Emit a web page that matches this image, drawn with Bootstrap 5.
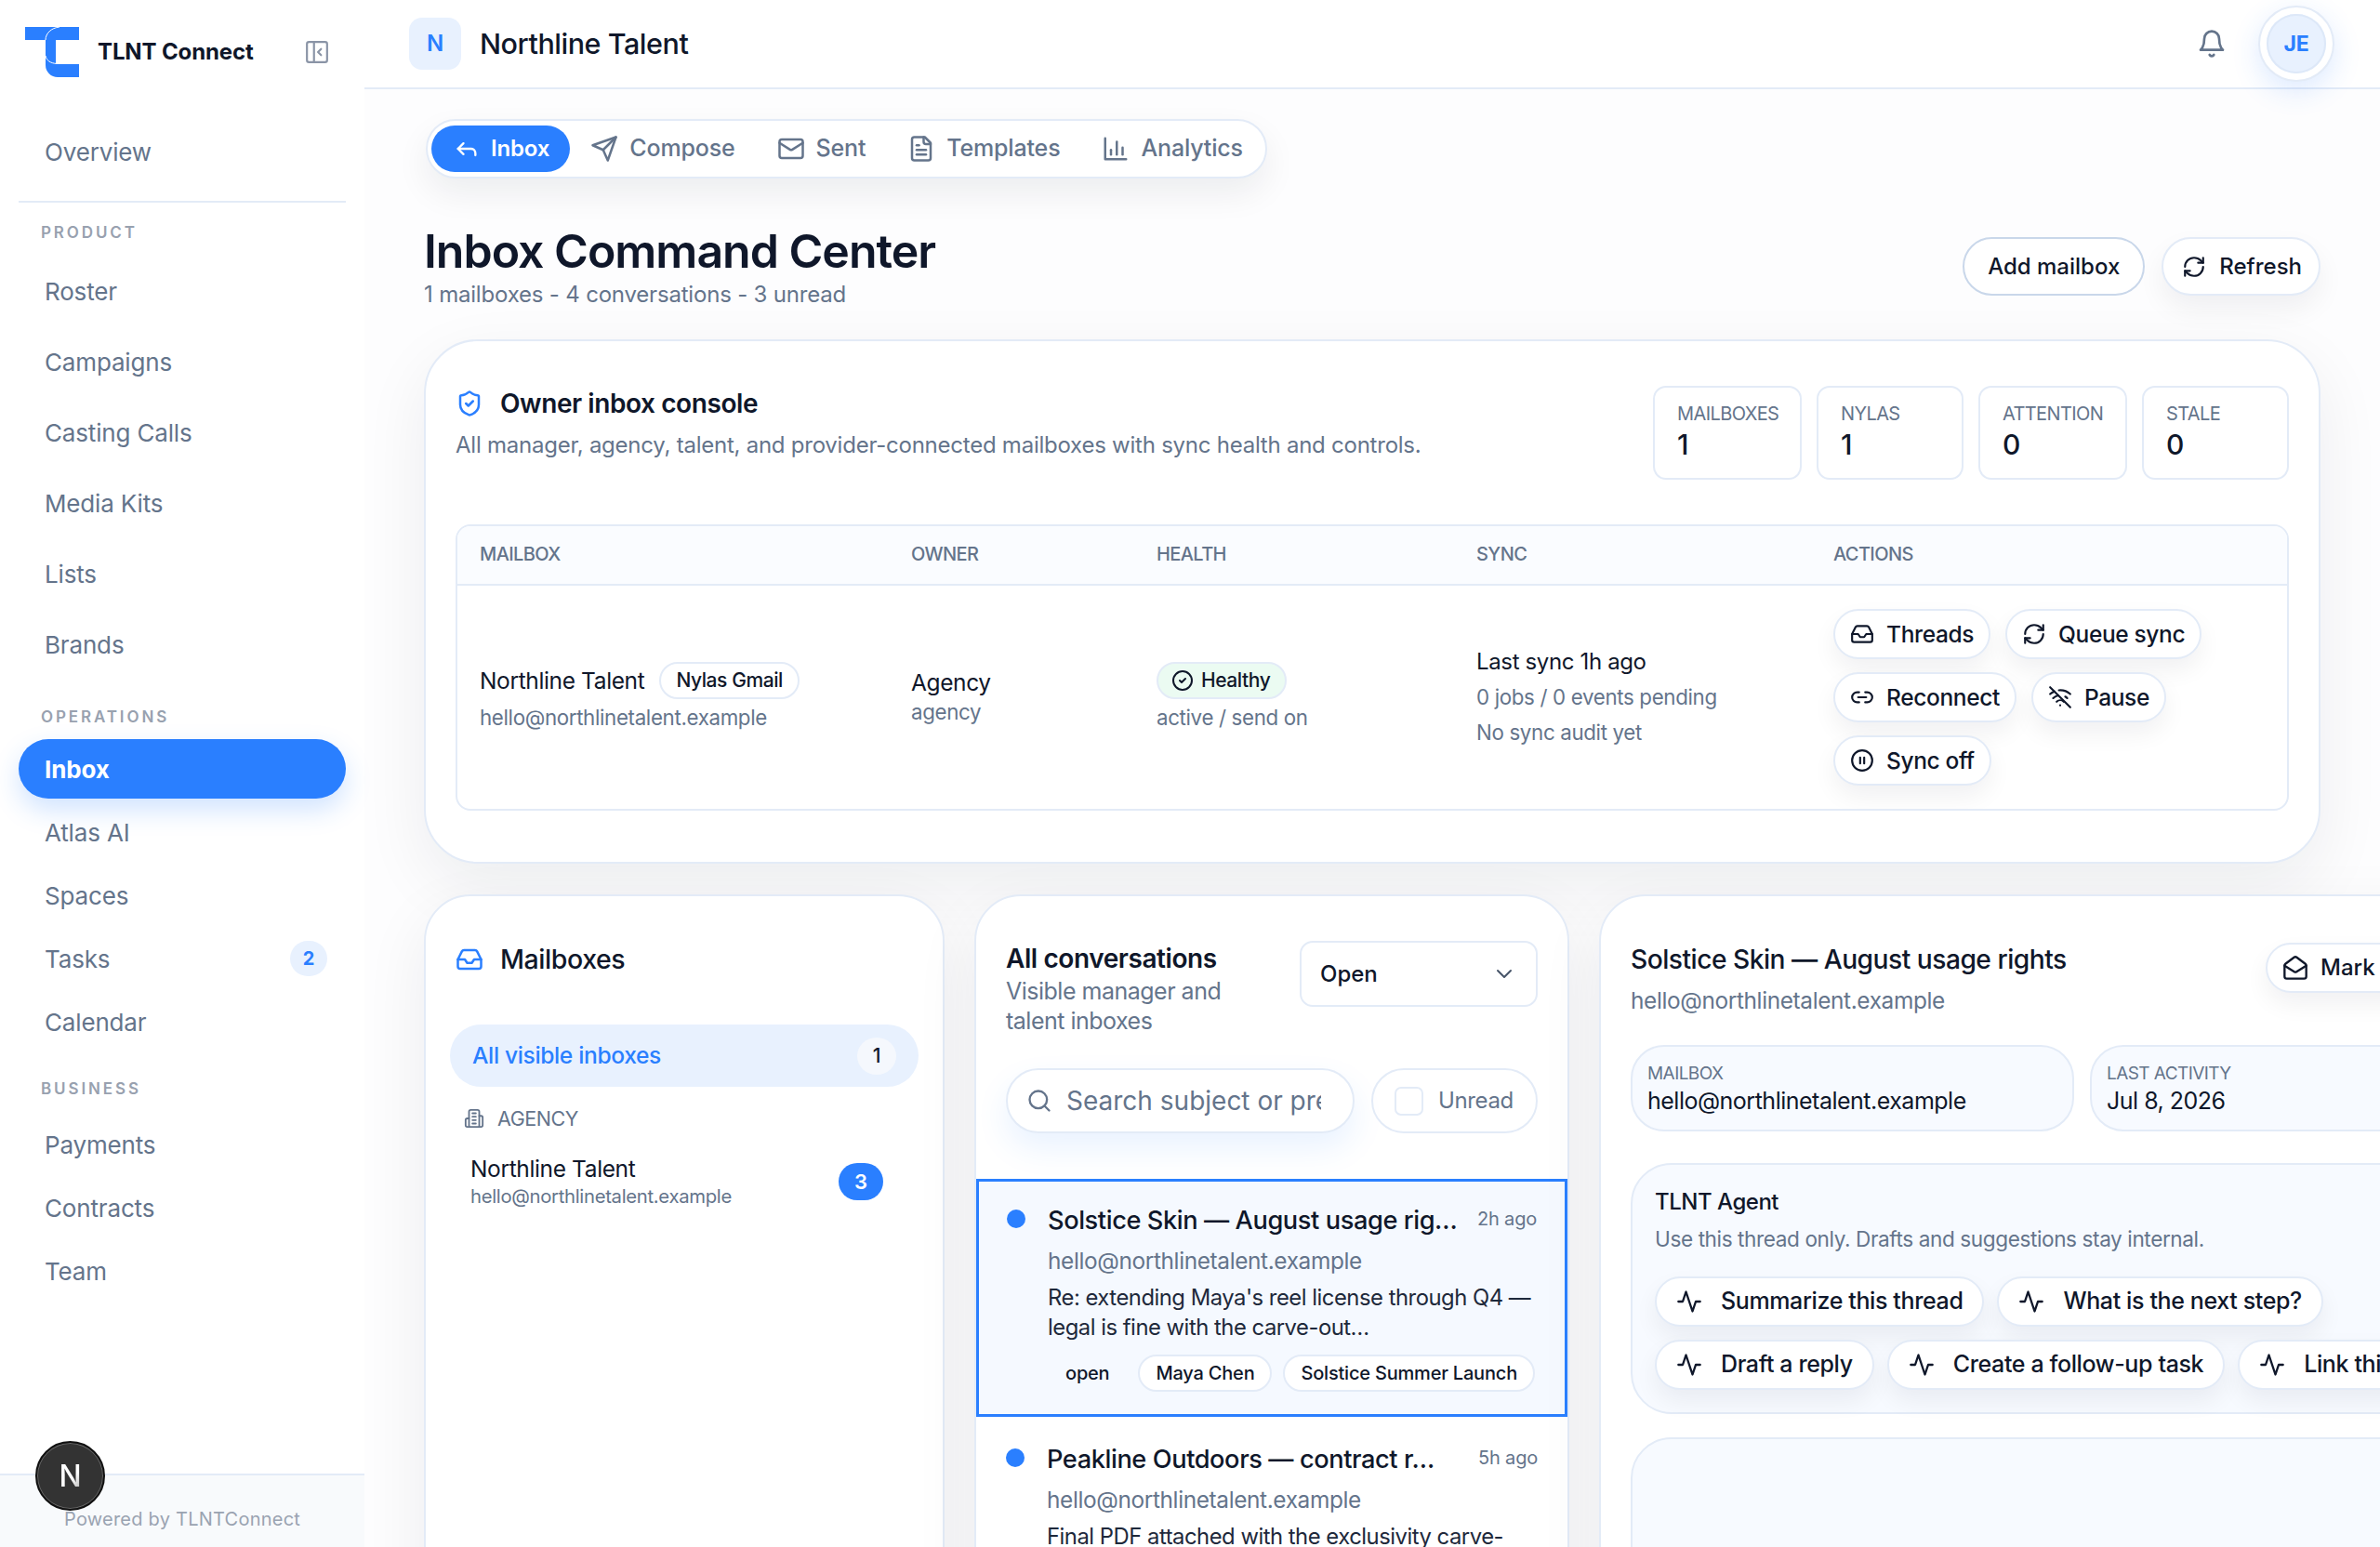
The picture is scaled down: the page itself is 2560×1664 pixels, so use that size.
<!DOCTYPE html>
<html lang="en">
<head>
  <meta charset="UTF-8">
  <title>Inbox Command Center</title>
  <link href="https://cdn.jsdelivr.net/npm/bootstrap@5.3.5/dist/css/bootstrap.min.css" rel="stylesheet">
  <style>
    :root {
      --tl-blue: #2a7fff;
      --tl-ink: #0f172a;
      --tl-muted: #64748b;
      --tl-line: #e3ebf7;
      --tl-soft: #f7faff;
    }
    html, body { height: 100%; }
    body { font-family: Inter, "Noto Sans", sans-serif; color: var(--tl-ink); background: #fdfdfe; overflow: hidden; letter-spacing: -.01em; }
    .tl-shell { height: 100vh; overflow: hidden; }
    .tl-ic { fill: none; stroke: currentColor; stroke-width: 2; stroke-linecap: round; stroke-linejoin: round; flex: none; }

    /* sidebar */
    .tl-side { width: 392px; flex: none; background: #fff; height: 100vh; position: relative; }
    .tl-brand { height: 112px; padding: 0 38px 0 27px; }
    .tl-brand-name { font-size: 24px; font-weight: 700; margin-left: 20px; letter-spacing: -.005em; }
    .tl-collapse { color: #8a94a6; margin-left: auto; }
    .tl-menu { margin: 0 20px; }
    .tl-first { margin-top: 19px; }
    .tl-menu .nav-link { height: 64px; display: flex; align-items: center; padding: 0 28px; color: var(--tl-muted); font-size: 26px; border-radius: 32px; }
    .tl-menu .nav-link.active { background: var(--tl-blue); color: #fff; font-weight: 700; box-shadow: 0 12px 28px rgba(42,127,255,.22); }
    .tl-gap-lg { gap: 12px; }
    .tl-gap-sm { gap: 4px; }
    .tl-rule { height: 2px; background: var(--tl-line); margin: 21px 20px 0; }
    .tl-seclabel { height: 28px; line-height: 28px; margin-left: 44px; font-size: 17px; font-weight: 600; letter-spacing: .17em; color: #98a1af; }
    .tl-sec-a { margin-top: 18px; margin-bottom: 17px; }
    .tl-sec-b { margin-top: 32px; margin-bottom: 10px; }
    .tl-sec-c { margin-top: 26px; margin-bottom: 14px; }
    .tl-count { margin-left: auto; margin-right: -8px; width: 40px; height: 38px; border-radius: 19px; background: #e8f1fe; color: var(--tl-blue); font-size: 20px; font-weight: 700; }
    .tl-foot { position: absolute; left: 0; right: 0; bottom: 0; height: 79px; background: #f8fafc; border-top: 2px solid var(--tl-line); padding-top: 34px; padding-left: 69px; font-size: 20px; color: #9aa3b1; letter-spacing: .012em; line-height: 26px; }
    .tl-devbadge { position: absolute; left: 38px; top: 1550px; width: 75px; height: 75px; border-radius: 50%; background: #333; border: 2px solid #111; box-shadow: 0 0 0 1px #666 inset; font-size: 32px; font-weight: 500; }
    .tl-devbadge span { background: linear-gradient(135deg, #fff 55%, #8d8d8d); -webkit-background-clip: text; background-clip: text; color: transparent; }

    /* top bar */
    .tl-main { flex: 1 1 auto; min-width: 0; height: 100vh; overflow: hidden; }
    .tl-top { height: 96px; border-bottom: 2px solid var(--tl-line); padding: 0 49px 0 48px; background: #fff; }
    .tl-tile { width: 56px; height: 56px; border-radius: 14px; background: #e8f1fe; color: var(--tl-blue); font-size: 24px; font-weight: 600; }
    .tl-workspace { font-size: 30.500px; font-weight: 500; margin-left: 20px; letter-spacing: -.015em; }
    .tl-bell { color: var(--tl-muted); margin-right: 34px; }
    .tl-avatar { width: 82px; height: 82px; border-radius: 50%; border: 2px solid var(--tl-line); padding: 7px; background: #fff; box-shadow: 0 10px 30px rgba(42,127,255,.16); position: relative; z-index: 2; }
    .tl-avatar span { width: 100%; height: 100%; border-radius: 50%; background: #e8f1fe; box-shadow: inset 0 0 0 2px #dde8f8; color: var(--tl-blue); font-size: 23px; font-weight: 700; display: flex; align-items: center; justify-content: center; }

    /* page */
    .tl-page { padding: 32px 0 0 64px; }
    .tl-inner { width: 2040px; }
    .tl-tabs { width: 905px; height: 64px; margin-left: 2px; border: 2px solid var(--tl-line); border-radius: 32px; background: #fff; box-shadow: 0 16px 36px rgba(15,23,42,.07); padding: 0 4px; gap: 5px; }
    .tl-tab { height: 50px; display: flex; align-items: center; gap: 12px; color: var(--tl-muted); font-size: 25px; font-weight: 500; padding: 0 20px; border-radius: 25px; text-decoration: none; }
    .tl-tab.active { background: var(--tl-blue); color: #fff; font-size: 24px; font-weight: 600; padding: 0 22px 0 24px; margin-right: -3px; }
    .tl-head { margin-top: 48px; margin-bottom: 32px; height: 93px; }
    .tl-h1 { font-size: 50px; line-height: 60px; font-weight: 600; margin: 0; letter-spacing: -.02em; }
    .tl-sub { font-size: 24px; line-height: 33px; color: var(--tl-muted); margin: 0; letter-spacing: -.008em; }
    .tl-btn { height: 63px; border-radius: 32px; background: #fff; border: 2px solid var(--tl-line); color: var(--tl-ink); font-size: 24px; font-weight: 500; padding: 0 18px 0 20px; display: inline-flex; align-items: center; gap: 14px; box-shadow: 0 14px 30px rgba(15,23,42,.06); }
    .tl-btn-line { border-color: #c9d7ea; box-shadow: none; padding: 0 25px; margin-right: 18px; }

    .tl-panel { background: #fff; border: 2px solid var(--tl-line); box-shadow: 0 24px 70px rgba(15,23,42,.07); }
    .tl-console { border-radius: 58px; padding: 48px 32px 56px; height: 564px; }
    .tl-console-title { font-size: 28px; font-weight: 600; line-height: 38px; letter-spacing: -.015em; margin-left: 18px; }
    .tl-console-desc { font-size: 24px; line-height: 34px; color: var(--tl-muted); margin: 9px 0 0; letter-spacing: -.01em; }
    .tl-stat { height: 101px; border: 2px solid var(--tl-line); border-radius: 14px; padding: 14px 24px; }
    .tl-stat-a { width: 160px; }
    .tl-stat-b { width: 158px; }
    .tl-stat-lab { font-size: 20px; line-height: 28px; color: var(--tl-muted); letter-spacing: -.03em; }
    .tl-stat-val { font-size: 30px; line-height: 38px; font-weight: 500; }
    .tl-tablewrap { margin-top: 48px; border: 2px solid var(--tl-line); border-radius: 16px; overflow: hidden; }
    .tl-table { margin: 0; table-layout: fixed; width: 100%; }
    .tl-table th { height: 63px; background: #fafcff; color: var(--tl-muted); font-size: 20px; line-height: 24px; font-weight: 500; padding: 0 0 3px 24px; vertical-align: middle; border-bottom: 2px solid var(--tl-line); letter-spacing: -.03em; }
    .tl-table td { height: 241px; padding: 0 0 0 24px; vertical-align: middle; border: 0; color: var(--tl-ink); }
    .tl-w1 { width: 464px; } .tl-w2 { width: 264px; } .tl-w3 { width: 344px; } .tl-w4 { width: 384px; }
    .tl-strong { font-size: 24.500px; line-height: 32px; letter-spacing: -.015em; }
    .tl-quiet { font-size: 22.300px; line-height: 32px; color: var(--tl-muted); letter-spacing: -.015em; }
    .tl-sync { font-size: 24px; }
    .tl-stack { margin-top: 6px; }
    .tl-chip { display: inline-flex; align-items: center; gap: 8px; height: 40px; border-radius: 20px; border: 2px solid var(--tl-line); background: #fff; font-size: 21px; font-weight: 500; padding: 0 16px; letter-spacing: -.02em; }
    .tl-chip-ok { background: #ebfbf2; padding: 0 16px 0 14px; }
    .tl-actions { gap: 14px 16px; }
    .tl-act { height: 54px; border-radius: 27px; background: #fff; border: 2px solid var(--tl-line); color: var(--tl-ink); font-size: 24.500px; font-weight: 500; padding: 0 16px; display: inline-flex; align-items: center; gap: 13px; box-shadow: 0 12px 26px rgba(15,23,42,.06); letter-spacing: -.015em; }

    /* lower panels */
    .tl-lower { margin-top: 33px; gap: 32px; width: 2400px; }
    .tl-col-a { width: 560px; flex: none; height: 800px; border-radius: 50px; padding: 48px 26px; }
    .tl-col-b { width: 640px; flex: none; height: 800px; border-radius: 50px; overflow: hidden; }
    .tl-col-c { width: 1100px; flex: none; height: 800px; border-radius: 50px; padding: 48px 32px; }
    .tl-panel-title { font-size: 28.500px; line-height: 40px; font-weight: 500; letter-spacing: -.015em; }
    .tl-box-head { margin-left: 6px; gap: 18px; }
    .tl-all { height: 67px; border-radius: 34px; background: #e8f1fe; margin-top: 50px; padding: 0 24px; color: var(--tl-blue); font-size: 24.600px; font-weight: 500; letter-spacing: -.015em; }
    .tl-all-n { width: 42px; height: 40px; border-radius: 50%; background: #f5f8fd; color: var(--tl-ink); font-size: 21px; margin-left: auto; margin-right: 0; }
    .tl-group { color: var(--tl-muted); font-size: 21.500px; line-height: 30px; margin: 19px 0 0 15px; gap: 14px; letter-spacing: -.02em; }
    .tl-mbx { margin: 23px 38px 0 22px; }
    .tl-mbx-mail { font-size: 20.300px; line-height: 28px; color: var(--tl-muted); letter-spacing: -.015em; }
    .tl-mbx-n { width: 48px; height: 40px; border-radius: 20px; background: var(--tl-blue); color: #fff; font-size: 22px; font-weight: 600; margin-left: auto; }

    .tl-conv-head { padding: 48px 32px 0; }
    .tl-conv-title { font-size: 28px; line-height: 38px; font-weight: 600; letter-spacing: -.015em; }
    .tl-conv-sub { font-size: 25px; line-height: 32px; color: var(--tl-muted); width: 300px; letter-spacing: -.02em; }
    .tl-select { width: 256px; height: 71px; margin-top: 0; border: 2px solid var(--tl-line); border-radius: 14px; color: var(--tl-ink); font-size: 24px; font-weight: 500; padding: 0 58px 0 20px; background-image: url("data:image/svg+xml,%3csvg xmlns='http://www.w3.org/2000/svg' viewBox='0 0 24 24' fill='none' stroke='%23475569' stroke-width='2' stroke-linecap='round' stroke-linejoin='round'%3e%3cpath d='m5 8 7 7 7-7'/%3e%3c/svg%3e"); background-position: right 22px center; background-size: 24px; }
    .tl-search-row { padding: 0 32px; margin-top: 35px; gap: 18px; }
    .tl-search { width: 375px; height: 70px; border: 2px solid var(--tl-line); border-radius: 35px; padding: 0 34px 0 20px; gap: 15px; box-shadow: 0 16px 34px rgba(42,127,255,.1); color: var(--tl-muted); background: #fff; }
    .tl-search .form-control { border: 0; padding: 0; font-size: 28px; letter-spacing: 0; box-shadow: none; background: none; color: var(--tl-muted); min-width: 0; }
    .tl-search .form-control::placeholder { color: var(--tl-muted); opacity: 1; }
    .tl-unread { width: 179px; height: 70px; border: 2px solid var(--tl-line); border-radius: 35px; padding-left: 23px; gap: 16px; font-size: 24px; color: var(--tl-muted); letter-spacing: -.015em; }
    .tl-unread .form-check-input { width: 31px; height: 31px; margin: 0; border: 2px solid var(--tl-line); border-radius: 7px; flex: none; }
    .tl-threads { margin-top: 49px; }
    .tl-thread { padding: 30px 32px 0; border-bottom: 2px solid var(--tl-line); height: 256px; }
    .tl-thread.active { background: #f5f9ff; border: 3px solid var(--tl-blue); padding: 26px 30px 0; }
    .tl-dot { width: 20px; height: 20px; border-radius: 50%; background: var(--tl-blue); flex: none; margin-top: 4px; }
    .tl-thread-body { margin-left: 24px; min-width: 0; flex: 1; }
    .tl-thread-title { font-size: 27.200px; line-height: 32px; font-weight: 500; white-space: nowrap; min-width: 0; flex: 1; letter-spacing: -.015em; }
    .tl-when { font-size: 20px; line-height: 28px; color: var(--tl-muted); flex: none; letter-spacing: -.01em; }
    .tl-thread-mail { font-size: 24.400px; line-height: 32px; color: var(--tl-muted); margin-top: 11px; letter-spacing: -.015em; }
    .tl-thread-text { font-size: 23.800px; line-height: 32px; margin-top: 8px; letter-spacing: -.02em; color: #1e293b; }
    .tl-tags { margin-top: 13px; gap: 12px; }
    .tl-tag { height: 40px; border-radius: 20px; border: 2px solid var(--tl-line); font-size: 20px; font-weight: 500; padding: 0 17px; background: #fff; letter-spacing: -.01em; white-space: nowrap; }
    .tl-tag-bare { border-color: transparent; background: none; }

    .tl-detail-head { width: 683px; }
    .tl-detail-title { font-size: 28.200px; line-height: 40px; font-weight: 500; letter-spacing: -.018em; }
    .tl-detail-mail { font-size: 24.400px; line-height: 32px; margin-top: 8px; color: var(--tl-muted); letter-spacing: -.015em; }
    .tl-mark { height: 54px; border-radius: 27px; background: #fff; border: 2px solid var(--tl-line); font-size: 24px; font-weight: 500; padding: 0 16px; display: flex; align-items: center; gap: 13px; white-space: nowrap; box-shadow: 0 12px 26px rgba(15,23,42,.06); margin-top: 2px; color: var(--tl-ink); }
    .tl-meta-row { margin-top: 32px; gap: 17px; }
    .tl-meta { height: 93px; width: 477px; background: var(--tl-soft); border: 2px solid var(--tl-line); border-radius: 36px; padding: 16px 16px; flex: none; }
    .tl-meta-lab { font-size: 19px; line-height: 26px; color: var(--tl-muted); letter-spacing: -.03em; }
    .tl-meta-val { font-size: 25px; line-height: 32px; letter-spacing: -.02em; }
    .tl-agent { margin-top: 34px; height: 270px; background: var(--tl-soft); border: 2px solid var(--tl-line); border-radius: 44px; padding: 24px 24px; }
    .tl-agent-title { font-size: 24px; line-height: 32px; font-weight: 500; letter-spacing: -.02em; }
    .tl-agent-desc { font-size: 22.600px; line-height: 32px; color: var(--tl-muted); margin-top: 8px; letter-spacing: -.018em; }
    .tl-asks { margin-top: 24px; gap: 14px; width: 1000px; }
    .tl-asks .tl-actions { gap: 14px; }
    .tl-ask { font-size: 25px; padding: 0 21px; gap: 20px; }
    .tl-next { margin-top: 25px; height: 300px; background: var(--tl-soft); border: 2px solid var(--tl-line); border-radius: 44px; }
    .tl-blue { color: var(--tl-blue); }
  </style>
</head>
<body>
  <svg class="d-none" xmlns="http://www.w3.org/2000/svg">
    <symbol id="i-reply" viewBox="0 0 24 24"><polyline points="9 17 4 12 9 7"/><path d="M20 18v-2a4 4 0 0 0-4-4H4"/></symbol>
    <symbol id="i-send" viewBox="0 0 24 24"><path d="m22 2-7 20-4-9-9-4Z"/><path d="M22 2 11 13"/></symbol>
    <symbol id="i-mail" viewBox="0 0 24 24"><rect width="20" height="16" x="2" y="4" rx="2"/><path d="m22 7-8.97 5.7a1.94 1.94 0 0 1-2.06 0L2 7"/></symbol>
    <symbol id="i-file" viewBox="0 0 24 24"><path d="M15 2H6a2 2 0 0 0-2 2v16a2 2 0 0 0 2 2h12a2 2 0 0 0 2-2V7Z"/><path d="M14 2v4a2 2 0 0 0 2 2h4"/><path d="M10 9H8"/><path d="M16 13H8"/><path d="M16 17H8"/></symbol>
    <symbol id="i-chart" viewBox="0 0 24 24"><path d="M3 3v18h18"/><path d="M8 17v-4"/><path d="M13 17V6"/><path d="M18 17v-6"/></symbol>
    <symbol id="i-bell" viewBox="0 0 24 24"><path d="M6 8a6 6 0 0 1 12 0c0 7 3 9 3 9H3s3-2 3-9"/><path d="M10.3 21a1.94 1.94 0 0 0 3.4 0"/></symbol>
    <symbol id="i-refresh" viewBox="0 0 24 24"><path d="M3 12a9 9 0 0 1 9-9 9.75 9.75 0 0 1 6.74 2.74L21 8"/><path d="M21 3v5h-5"/><path d="M21 12a9 9 0 0 1-9 9 9.75 9.75 0 0 1-6.74-2.74L3 16"/><path d="M8 16H3v5"/></symbol>
    <symbol id="i-shield" viewBox="0 0 24 24"><path d="M20 13c0 5-3.5 7.5-7.66 8.95a1 1 0 0 1-.67-.01C7.5 20.5 4 18 4 13V6a1 1 0 0 1 1-1c2 0 4.5-1.2 6.24-2.72a1.17 1.17 0 0 1 1.52 0C14.51 3.81 17 5 19 5a1 1 0 0 1 1 1z"/><path d="m9 12 2 2 4-4"/></symbol>
    <symbol id="i-inbox" viewBox="0 0 24 24"><polyline points="22 12 16 12 14 15 10 15 8 12 2 12"/><path d="M5.45 5.11 2 12v6a2 2 0 0 0 2 2h16a2 2 0 0 0 2-2v-6l-3.45-6.89A2 2 0 0 0 16.76 4H7.24a2 2 0 0 0-1.79 1.11z"/></symbol>
    <symbol id="i-link" viewBox="0 0 24 24"><path d="M9 17H7A5 5 0 0 1 7 7h2"/><path d="M15 7h2a5 5 0 1 1 0 10h-2"/><line x1="8" x2="16" y1="12" y2="12"/></symbol>
    <symbol id="i-wifioff" viewBox="0 0 24 24"><path d="M12 20h.01"/><path d="M8.5 16.429a5 5 0 0 1 7 0"/><path d="M5 12.859a10 10 0 0 1 5.17-2.69"/><path d="M19 12.859a10 10 0 0 0-2.007-1.523"/><path d="M2 8.82a15 15 0 0 1 4.177-2.643"/><path d="M22 8.82a15 15 0 0 0-11.288-3.764"/><path d="m2 2 20 20"/></symbol>
    <symbol id="i-pause" viewBox="0 0 24 24"><circle cx="12" cy="12" r="10"/><line x1="10" x2="10" y1="15" y2="9"/><line x1="14" x2="14" y1="15" y2="9"/></symbol>
    <symbol id="i-activity" viewBox="0 0 24 24"><polyline points="22 12 18 12 15 21 9 3 6 12 2 12"/></symbol>
    <symbol id="i-mailopen" viewBox="0 0 24 24"><path d="M21.2 8.4c.5.38.8.97.8 1.6v10a2 2 0 0 1-2 2H4a2 2 0 0 1-2-2V10a2 2 0 0 1 .8-1.6l8-6a2 2 0 0 1 2.4 0l8 6Z"/><path d="m22 10-8.97 5.7a1.94 1.94 0 0 1-2.06 0L2 10"/></symbol>
    <symbol id="i-building" viewBox="0 0 24 24"><path d="M6 22V4a2 2 0 0 1 2-2h8a2 2 0 0 1 2 2v18Z"/><path d="M6 12H4a2 2 0 0 0-2 2v6a2 2 0 0 0 2 2h2"/><path d="M18 9h2a2 2 0 0 1 2 2v9a2 2 0 0 1-2 2h-2"/><path d="M10 6h4"/><path d="M10 10h4"/><path d="M10 14h4"/><path d="M10 18h4"/></symbol>
    <symbol id="i-check" viewBox="0 0 24 24"><circle cx="12" cy="12" r="10"/><path d="m9 12 2 2 4-4"/></symbol>
    <symbol id="i-search" viewBox="0 0 24 24"><circle cx="11" cy="11" r="8"/><path d="m21 21-4.3-4.3"/></symbol>
    <symbol id="i-panel" viewBox="0 0 24 24"><rect width="20" height="20" x="2" y="2" rx="2"/><path d="M9 2v20"/><path d="m16 15-3-3 3-3"/></symbol>
  </svg>

  <div class="tl-shell d-flex">
    <!-- sidebar -->
    <aside class="tl-side">
      <div class="tl-brand d-flex align-items-center">
        <svg width="58" height="54" viewBox="0 0 58 54" xmlns="http://www.w3.org/2000/svg" aria-hidden="true">
          <path fill="#2a7fff" d="M0 0H58V14H33V40H58V54H35A13 13 0 0 1 22 41V14H0Z"/>
          <path fill="none" stroke="#fff" stroke-width="1" d="M37 0C28 1 22 7 22 14M22 31C23 36 27 39 34 39.500"/>
        </svg>
        <span class="tl-brand-name">TLNT Connect</span>
        <svg class="tl-ic tl-collapse" width="26" height="26"><use href="#i-panel"/></svg>
      </div>

      <nav class="nav flex-column tl-menu tl-first"><a class="nav-link" href="#">Overview</a></nav>
      <div class="tl-rule"></div>

      <div class="tl-seclabel tl-sec-a">PRODUCT</div>
      <nav class="nav flex-column tl-menu tl-gap-lg">
        <a class="nav-link" href="#">Roster</a>
        <a class="nav-link" href="#">Campaigns</a>
        <a class="nav-link" href="#">Casting Calls</a>
        <a class="nav-link" href="#">Media Kits</a>
        <a class="nav-link" href="#">Lists</a>
        <a class="nav-link" href="#">Brands</a>
      </nav>

      <div class="tl-seclabel tl-sec-b">OPERATIONS</div>
      <nav class="nav flex-column tl-menu tl-gap-sm">
        <a class="nav-link active" href="#">Inbox</a>
        <a class="nav-link" href="#">Atlas AI</a>
        <a class="nav-link" href="#">Spaces</a>
        <a class="nav-link" href="#">Tasks<span class="tl-count d-flex align-items-center justify-content-center">2</span></a>
        <a class="nav-link" href="#">Calendar</a>
      </nav>

      <div class="tl-seclabel tl-sec-c">BUSINESS</div>
      <nav class="nav flex-column tl-menu tl-gap-sm">
        <a class="nav-link" href="#">Payments</a>
        <a class="nav-link" href="#">Contracts</a>
        <a class="nav-link" href="#">Team</a>
      </nav>

      <div class="tl-foot">Powered by TLNTConnect</div>
      <div class="tl-devbadge d-flex align-items-center justify-content-center"><span>N</span></div>
    </aside>

    <main class="tl-main">
      <header class="tl-top d-flex align-items-center">
        <div class="tl-tile d-flex align-items-center justify-content-center">N</div>
        <div class="tl-workspace">Northline Talent</div>
        <svg class="tl-ic tl-bell ms-auto" width="32" height="32"><use href="#i-bell"/></svg>
        <div class="tl-avatar"><span>JE</span></div>
      </header>

      <div class="tl-page">
        <div class="tl-inner">
          <nav class="tl-tabs d-flex align-items-center">
            <a class="tl-tab active" href="#"><svg class="tl-ic" width="28" height="28"><use href="#i-reply"/></svg>Inbox</a>
            <a class="tl-tab" href="#"><svg class="tl-ic" width="30" height="30"><use href="#i-send"/></svg>Compose</a>
            <a class="tl-tab" href="#"><svg class="tl-ic" width="30" height="30"><use href="#i-mail"/></svg>Sent</a>
            <a class="tl-tab" href="#"><svg class="tl-ic" width="30" height="30"><use href="#i-file"/></svg>Templates</a>
            <a class="tl-tab" href="#"><svg class="tl-ic" width="30" height="30"><use href="#i-chart"/></svg>Analytics</a>
          </nav>

          <div class="tl-head d-flex align-items-center">
            <div class="me-auto">
              <h1 class="tl-h1">Inbox Command Center</h1>
              <p class="tl-sub">1 mailboxes - 4 conversations - 3 unread</p>
            </div>
            <button class="tl-btn tl-btn-line" type="button">Add mailbox</button>
            <button class="tl-btn" type="button"><svg class="tl-ic" width="26" height="26"><use href="#i-refresh"/></svg>Refresh</button>
          </div>

          <!-- owner console -->
          <section class="tl-panel tl-console">
            <div class="d-flex">
              <div class="me-auto">
                <div class="d-flex align-items-center">
                  <svg class="tl-ic tl-blue" width="30" height="30"><use href="#i-shield"/></svg>
                  <span class="tl-console-title">Owner inbox console</span>
                </div>
                <p class="tl-console-desc">All manager, agency, talent, and provider-connected mailboxes with sync health and controls.</p>
              </div>
              <div class="d-flex gap-3">
                <div class="tl-stat tl-stat-a"><div class="tl-stat-lab">MAILBOXES</div><div class="tl-stat-val">1</div></div>
                <div class="tl-stat tl-stat-b"><div class="tl-stat-lab">NYLAS</div><div class="tl-stat-val">1</div></div>
                <div class="tl-stat tl-stat-a"><div class="tl-stat-lab">ATTENTION</div><div class="tl-stat-val">0</div></div>
                <div class="tl-stat tl-stat-b"><div class="tl-stat-lab">STALE</div><div class="tl-stat-val">0</div></div>
              </div>
            </div>

            <div class="tl-tablewrap">
              <table class="table tl-table">
                <thead>
                  <tr>
                    <th class="tl-w1">MAILBOX</th>
                    <th class="tl-w2">OWNER</th>
                    <th class="tl-w3">HEALTH</th>
                    <th class="tl-w4">SYNC</th>
                    <th>ACTIONS</th>
                  </tr>
                </thead>
                <tbody>
                  <tr>
                    <td>
                      <div class="d-flex align-items-center gap-2"><span class="tl-strong">Northline Talent</span><span class="tl-chip ms-2">Nylas Gmail</span></div>
                      <div class="tl-quiet mt-1">hello@northlinetalent.example</div>
                    </td>
                    <td>
                      <div class="tl-strong">Agency</div>
                      <div class="tl-quiet">agency</div>
                    </td>
                    <td>
                      <span class="tl-chip tl-chip-ok"><svg class="tl-ic" width="24" height="24"><use href="#i-check"/></svg>Healthy</span>
                      <div class="tl-quiet mt-1">active / send on</div>
                    </td>
                    <td>
                      <div class="tl-strong tl-sync">Last sync 1h ago</div>
                      <div class="tl-quiet tl-stack">0 jobs / 0 events pending</div>
                      <div class="tl-quiet tl-stack">No sync audit yet</div>
                    </td>
                    <td>
                      <div class="d-flex flex-wrap tl-actions">
                        <button class="tl-act" type="button"><svg class="tl-ic" width="26" height="26"><use href="#i-inbox"/></svg>Threads</button>
                        <button class="tl-act" type="button"><svg class="tl-ic" width="26" height="26"><use href="#i-refresh"/></svg>Queue sync</button>
                        <div class="w-100 d-flex tl-actions">
                          <button class="tl-act" type="button"><svg class="tl-ic" width="26" height="26"><use href="#i-link"/></svg>Reconnect</button>
                          <button class="tl-act" type="button"><svg class="tl-ic" width="26" height="26"><use href="#i-wifioff"/></svg>Pause</button>
                        </div>
                        <button class="tl-act" type="button"><svg class="tl-ic" width="26" height="26"><use href="#i-pause"/></svg>Sync off</button>
                      </div>
                    </td>
                  </tr>
                </tbody>
              </table>
            </div>
          </section>
        </div>

        <div class="tl-lower d-flex">
          <!-- mailboxes -->
          <section class="tl-panel tl-col-a">
            <div class="d-flex align-items-center tl-box-head">
              <svg class="tl-ic tl-blue" width="30" height="30"><use href="#i-inbox"/></svg>
              <span class="tl-panel-title">Mailboxes</span>
            </div>
            <div class="tl-all d-flex align-items-center">All visible inboxes<span class="tl-all-n d-flex align-items-center justify-content-center">1</span></div>
            <div class="tl-group d-flex align-items-center"><svg class="tl-ic" width="22" height="22"><use href="#i-building"/></svg>AGENCY</div>
            <div class="tl-mbx d-flex align-items-center">
              <div>
                <div class="tl-strong">Northline Talent</div>
                <div class="tl-mbx-mail">hello@northlinetalent.example</div>
              </div>
              <span class="tl-mbx-n d-flex align-items-center justify-content-center">3</span>
            </div>
          </section>

          <!-- conversations -->
          <section class="tl-panel tl-col-b">
            <div class="tl-conv-head d-flex justify-content-between">
              <div>
                <div class="tl-conv-title">All conversations</div>
                <div class="tl-conv-sub">Visible manager and talent inboxes</div>
              </div>
              <select class="form-select tl-select"><option>Open</option></select>
            </div>
            <div class="tl-search-row d-flex">
              <div class="tl-search d-flex align-items-center">
                <svg class="tl-ic" width="28" height="28"><use href="#i-search"/></svg>
                <input class="form-control" type="text" placeholder="Search subject or preview">
              </div>
              <label class="tl-unread d-flex align-items-center"><input class="form-check-input" type="checkbox">Unread</label>
            </div>
            <div class="tl-threads">
              <article class="tl-thread active d-flex">
                <span class="tl-dot"></span>
                <div class="tl-thread-body">
                  <div class="d-flex"><div class="tl-thread-title">Solstice Skin — August usage rig…</div><div class="tl-when">2h ago</div></div>
                  <div class="tl-thread-mail">hello@northlinetalent.example</div>
                  <div class="tl-thread-text">Re: extending Maya's reel license through Q4 — legal is fine with the carve-out…</div>
                  <div class="tl-tags d-flex align-items-center">
                    <span class="tl-tag tl-tag-bare d-flex align-items-center">open</span>
                    <span class="tl-tag d-flex align-items-center">Maya Chen</span>
                    <span class="tl-tag d-flex align-items-center">Solstice Summer Launch</span>
                  </div>
                </div>
              </article>
              <article class="tl-thread d-flex">
                <span class="tl-dot"></span>
                <div class="tl-thread-body">
                  <div class="d-flex"><div class="tl-thread-title">Peakline Outdoors — contract r…</div><div class="tl-when">5h ago</div></div>
                  <div class="tl-thread-mail">hello@northlinetalent.example</div>
                  <div class="tl-thread-text">Final PDF attached with the exclusivity carve-<br>out marked up for review.</div>
                </div>
              </article>
            </div>
          </section>

          <!-- thread detail -->
          <section class="tl-panel tl-col-c">
            <div class="d-flex align-items-start">
              <div class="tl-detail-head">
                <div class="tl-detail-title">Solstice Skin — August usage rights</div>
                <div class="tl-detail-mail">hello@northlinetalent.example</div>
              </div>
              <button class="tl-mark" type="button"><svg class="tl-ic" width="28" height="28"><use href="#i-mailopen"/></svg>Mark read</button>
            </div>
            <div class="tl-meta-row d-flex">
              <div class="tl-meta"><div class="tl-meta-lab">MAILBOX</div><div class="tl-meta-val">hello@northlinetalent.example</div></div>
              <div class="tl-meta"><div class="tl-meta-lab">LAST ACTIVITY</div><div class="tl-meta-val">Jul 8, 2026</div></div>
            </div>
            <div class="tl-agent">
              <div class="tl-agent-title">TLNT Agent</div>
              <div class="tl-agent-desc">Use this thread only. Drafts and suggestions stay internal.</div>
              <div class="d-flex flex-wrap tl-asks">
                <button class="tl-act tl-ask" type="button"><svg class="tl-ic" width="28" height="28"><use href="#i-activity"/></svg>Summarize this thread</button>
                <button class="tl-act tl-ask" type="button"><svg class="tl-ic" width="28" height="28"><use href="#i-activity"/></svg>What is the next step?</button>
                <div class="w-100 d-flex tl-actions">
                  <button class="tl-act tl-ask" type="button"><svg class="tl-ic" width="28" height="28"><use href="#i-activity"/></svg>Draft a reply</button>
                  <button class="tl-act tl-ask" type="button"><svg class="tl-ic" width="28" height="28"><use href="#i-activity"/></svg>Create a follow-up task</button>
                  <button class="tl-act tl-ask" type="button"><svg class="tl-ic" width="28" height="28"><use href="#i-activity"/></svg>Link this thread</button>
                </div>
              </div>
            </div>
            <div class="tl-next"></div>
          </section>
        </div>
      </div>
    </main>
  </div>

  <script src="https://cdn.jsdelivr.net/npm/bootstrap@5.3.5/dist/js/bootstrap.bundle.min.js"></script>
</body>
</html>
